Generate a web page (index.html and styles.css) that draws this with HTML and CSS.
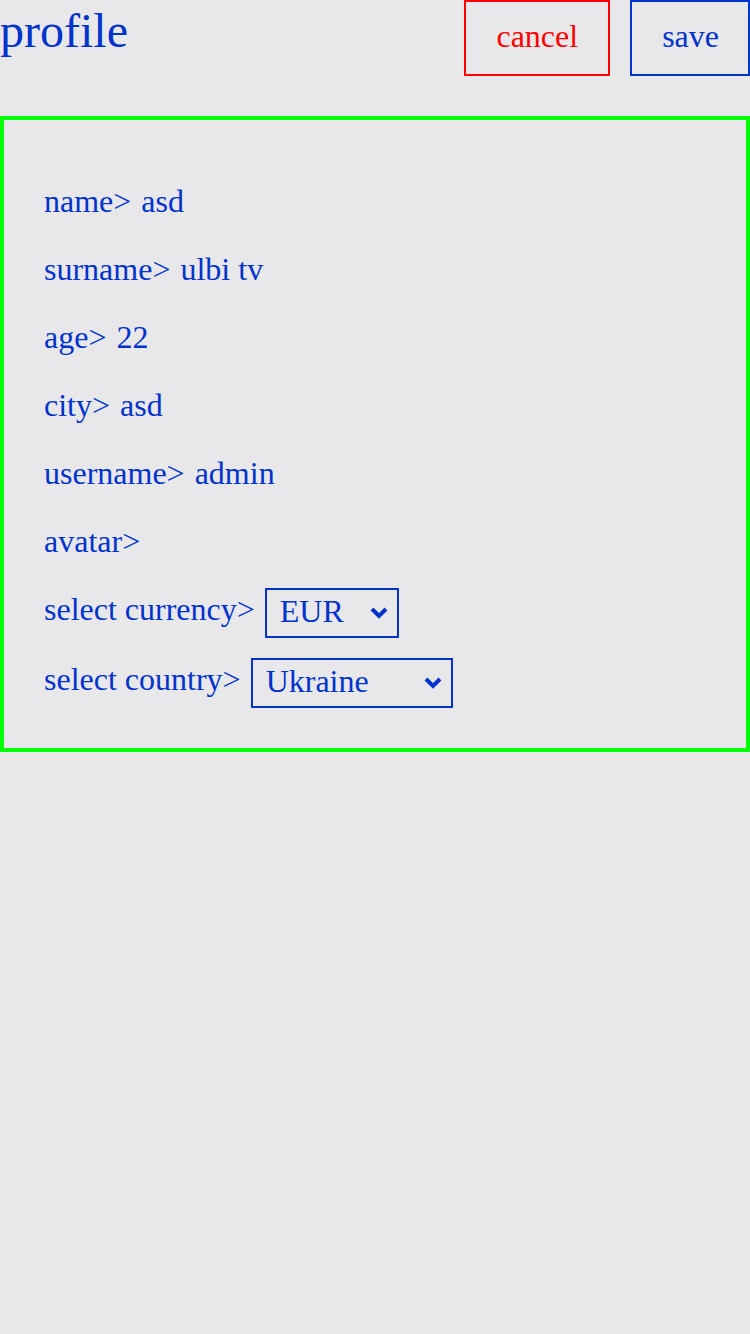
FILE: index.html
```html
<!DOCTYPE html>
<html lang="en">
<head>
<meta charset="utf-8">
<title>profile</title>
<link rel="stylesheet" href="styles.css">
</head>
<body>
<div class="page">
  <header class="header">
    <h1 class="title">profile</h1>
    <div class="actions">
      <button class="btn btn-cancel">cancel</button>
      <button class="btn btn-save">save</button>
    </div>
  </header>
  <section class="card">
    <div class="row"><span class="key">name&gt;</span> <span class="value">asd</span></div>
    <div class="row"><span class="key">surname&gt;</span> <span class="value">ulbi tv</span></div>
    <div class="row"><span class="key">age&gt;</span> <span class="value">22</span></div>
    <div class="row"><span class="key">city&gt;</span> <span class="value">asd</span></div>
    <div class="row"><span class="key">username&gt;</span> <span class="value">admin</span></div>
    <div class="row"><span class="key">avatar&gt;</span></div>
    <div class="selects">
      <div class="row row-select">
        <label class="label">select currency&gt;</label>
        <select class="select select-currency">
          <option>RUB</option>
          <option selected>EUR</option>
          <option>USD</option>
        </select>
      </div>
      <div class="row row-select">
        <label class="label">select country&gt;</label>
        <select class="select select-country">
          <option>Armenia</option>
          <option>Russia</option>
          <option>Belarus</option>
          <option>Kazakhstan</option>
          <option selected>Ukraine</option>
        </select>
      </div>
    </div>
  </section>
</div>
</body>
</html>
```

FILE: styles.css
```css
html, body {
  margin: 0;
  padding: 0;
  background: #e8e8ea;
}
body {
  font-family: "Liberation Serif", "Times New Roman", serif;
  color: #0033cc;
  width: 750px;
  min-height: 1334px;
}
.header {
  display: flex;
  justify-content: space-between;
  align-items: flex-start;
}
.title {
  margin: 0;
  padding-top: 3px;
  font-size: 48px;
  font-weight: normal;
  line-height: 55px;
}
.actions {
  display: flex;
  gap: 20px;
}
.btn {
  font-family: inherit;
  font-size: 32px;
  line-height: 36px;
  padding: 16px 30px 20px;
  background: transparent;
  border: 2px solid #0033cc;
  color: #0033cc;
  margin: 0;
  cursor: pointer;
}
.btn-cancel {
  border-color: #ff0000;
  color: #ff0000;
}
.btn-save {
  padding-right: 29px;
}
.card {
  margin-top: 40px;
  border: 4px solid #05ff05;
  padding: 57px 40px 40px;
  display: flex;
  flex-direction: column;
  gap: 20px;
  font-size: 32px;
}
.row {
  line-height: 48px;
}
.value {
  margin-left: 2px;
}
.selects {
  display: flex;
  flex-direction: column;
  gap: 17px;
}
.row-select {
  display: flex;
  align-items: flex-start;
  gap: 10px;
}
.select {
  -webkit-appearance: none;
  appearance: none;
  font-family: inherit;
  font-size: 32px;
  color: #0033cc;
  background-color: transparent;
  background-image: url("data:image/svg+xml,%3Csvg xmlns='http://www.w3.org/2000/svg' width='18' height='12' viewBox='0 0 18 12'%3E%3Cpath d='M2 2 L9 9 L16 2' fill='none' stroke='%230033cc' stroke-width='4'/%3E%3C/svg%3E");
  background-repeat: no-repeat;
  background-position: right 9px center;
  background-size: 18px 12px;
  border: 2px solid #0033cc;
  border-radius: 0;
  padding: 2px 36px 6px 13px;
  height: 50px;
  margin: 3px 0 0;
}
.select-currency {
  width: 134px;
}
.select-country {
  width: 202px;
}
```
